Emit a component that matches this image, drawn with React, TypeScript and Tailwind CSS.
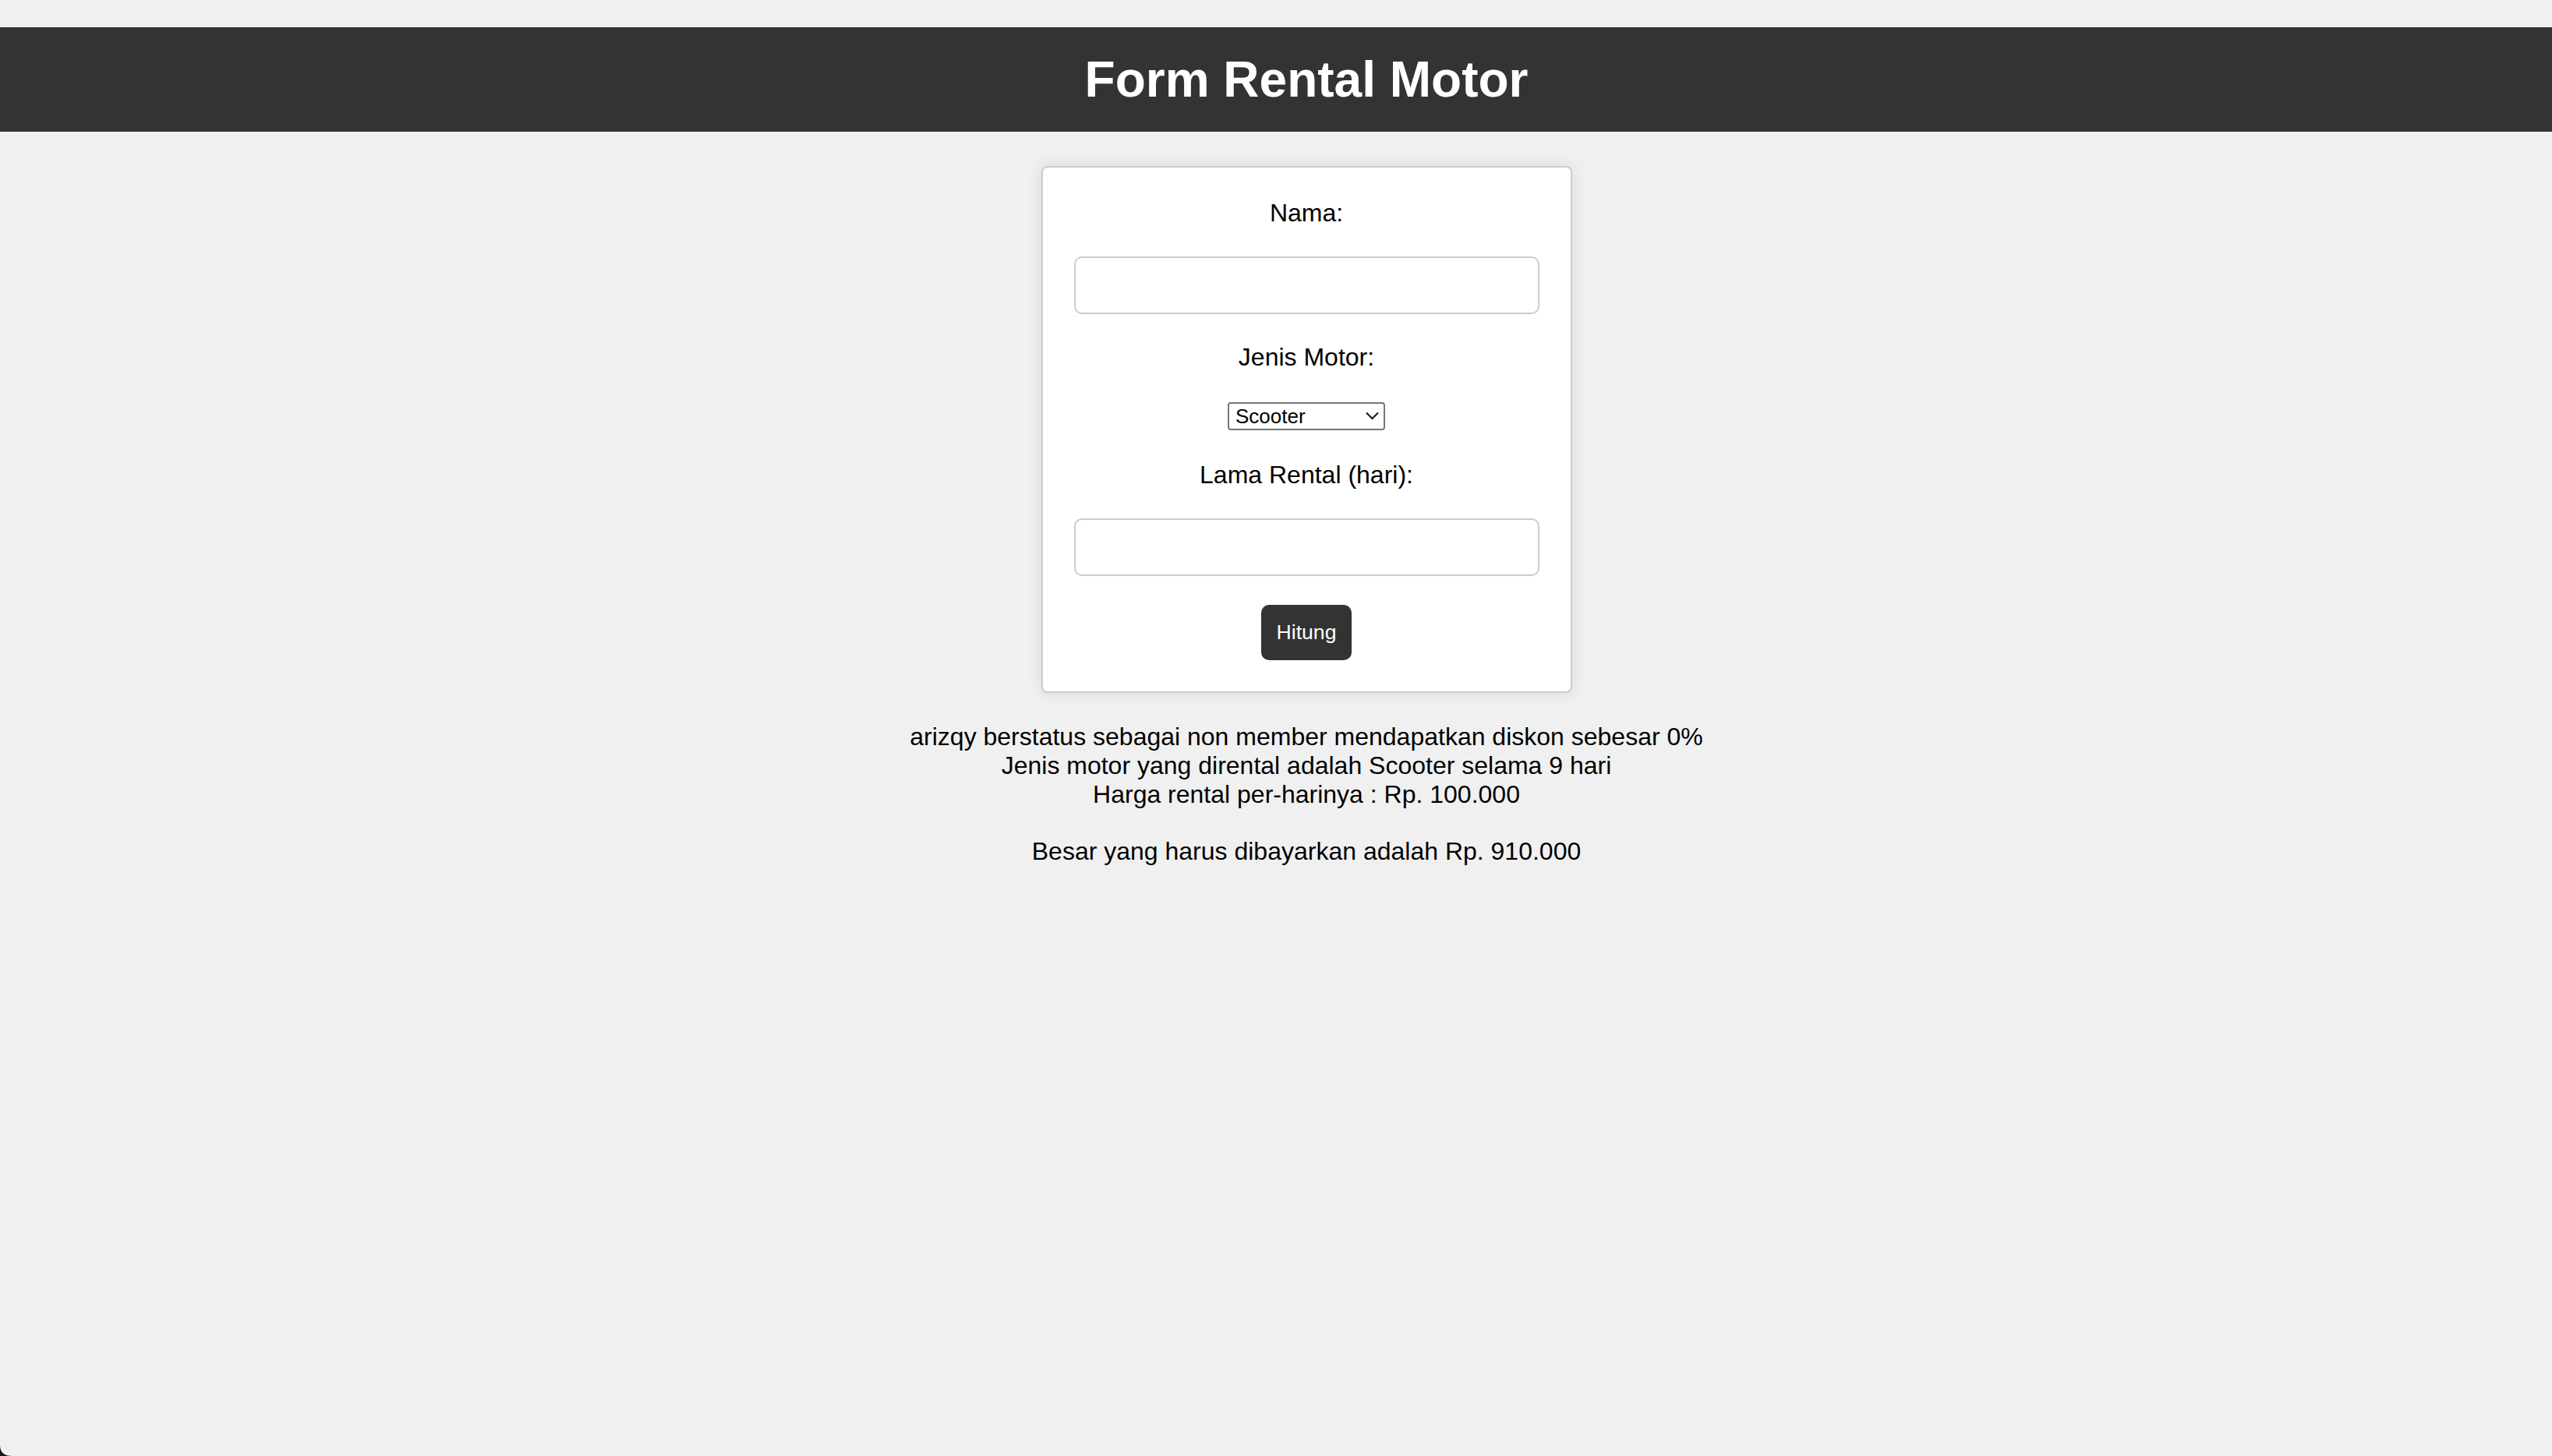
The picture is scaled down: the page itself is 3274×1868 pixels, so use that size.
const App = () => {
  return (
    <div className="relative min-h-screen bg-[#f0f0f0] pt-[35px] text-black font-['Liberation_Sans',Arial,sans-serif]">
      <header className="bg-[#333333] py-[30px] pl-[78px] text-center">
        <h1 className="text-[64px] font-bold leading-[74px] text-white">
          Form Rental Motor
        </h1>
      </header>

      <main className="flex flex-col items-center pl-[78px] pt-[44px]">
        <form
          className="flex w-[681px] flex-col items-center gap-[37px] rounded-[8px] border-2 border-[#cccccc] bg-white p-[40px] shadow-[0_0_20px_rgba(0,0,0,0.1)]"
          onSubmit={(e) => e.preventDefault()}
        >
          <label className="text-[32px] leading-[37px]">Nama:</label>
          <input
            type="text"
            className="h-[74px] w-full rounded-[10px] border-2 border-[#cccccc] bg-white px-4 text-[26px] outline-none"
          />
          <label className="text-[32px] leading-[37px]">Jenis Motor:</label>
          <div className="relative my-[2px] h-[36px] w-[202px]">
            <select
              defaultValue="Scooter"
              className="h-full w-full appearance-none rounded-[4px] border-2 border-[#767676] bg-white pl-[8px] text-[26px] leading-[30px] outline-none"
            >
              <option>Scooter</option>
              <option>Sport</option>
              <option>Trail</option>
            </select>
            <svg
              className="pointer-events-none absolute right-[8px] top-[12px]"
              width="17"
              height="11"
              viewBox="0 0 17 11"
              fill="none"
              stroke="#111"
              strokeWidth="2"
            >
              <path d="M1 1.5 L8.5 9 L16 1.5" />
            </svg>
          </div>
          <label className="text-[32px] leading-[37px]">Lama Rental (hari):</label>
          <input
            type="number"
            className="h-[74px] w-full rounded-[10px] border-2 border-[#cccccc] bg-white px-4 text-[26px] outline-none"
          />
          <button
            type="submit"
            className="h-[71px] rounded-[10px] bg-[#333333] px-[20px] text-[26.6px] text-white"
          >
            Hitung
          </button>
        </form>

        <div className="mt-[38px] text-center text-[32px] leading-[36.8px]">
          arizqy berstatus sebagai non member mendapatkan diskon sebesar 0%
          <br />
          Jenis motor yang dirental adalah Scooter selama 9 hari
          <br />
          Harga rental per-harinya : Rp. 100.000
          <br />
          <br />
          Besar yang harus dibayarkan adalah Rp. 910.000
        </div>
      </main>

      <svg className="absolute bottom-0 left-0" width="16" height="14" viewBox="0 0 16 14">
        <path d="M0 0 Q0 14 16 14 L0 14 Z" fill="#111827" />
      </svg>
    </div>
  );
};

export default App;
